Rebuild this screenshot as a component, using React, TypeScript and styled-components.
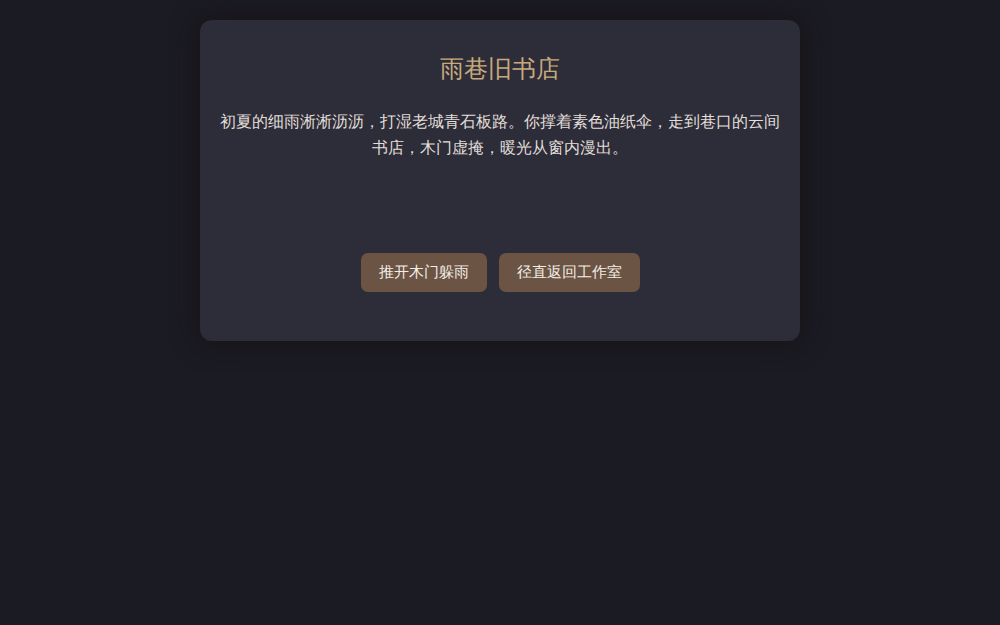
import React from "react";
import styled, { createGlobalStyle } from "styled-components";

const GlobalStyle = createGlobalStyle`
  html, body {
    margin: 0;
    padding: 0;
    background: #1b1b24;
    font-family: "DejaVu Sans", sans-serif;
  }
  * { box-sizing: border-box; }
`;

const Page = styled.div`
  min-height: 625px;
  display: flex;
  justify-content: center;
  align-items: flex-start;
  padding-top: 20px;
`;

const Card = styled.section`
  width: 600px;
  background: #2d2d3a;
  border-radius: 12px;
  padding: 33px 20px 49px;
  box-shadow: 0 0 28px rgba(22, 16, 12, 0.8);
  text-align: center;
`;

const Title = styled.h2`
  margin: 0 0 24px;
  font-size: 24px;
  line-height: 32px;
  font-weight: 400;
  color: #c9a97a;
`;

const Story = styled.p`
  margin: 0 0 92px;
  font-size: 16px;
  line-height: 26px;
  color: #e2ded8;
`;

const Actions = styled.div`
  display: flex;
  justify-content: center;
  gap: 12px;
`;

const ChoiceButton = styled.button`
  border: none;
  border-radius: 7px;
  background: #6b5444;
  color: #f2ede6;
  font-family: inherit;
  font-size: 15px;
  line-height: 19px;
  padding: 10px 18px;
  cursor: pointer;
`;

export default function App() {
  return (
    <>
      <GlobalStyle />
      <Page>
        <Card>
          <Title>雨巷旧书店</Title>
          <Story>
            初夏的细雨淅淅沥沥，打湿老城青石板路。你撑着素色油纸伞，走到巷口的云间书店，木门虚掩，暖光从窗内漫出。
          </Story>
          <Actions>
            <ChoiceButton>推开木门躲雨</ChoiceButton>
            <ChoiceButton>径直返回工作室</ChoiceButton>
          </Actions>
        </Card>
      </Page>
    </>
  );
}
